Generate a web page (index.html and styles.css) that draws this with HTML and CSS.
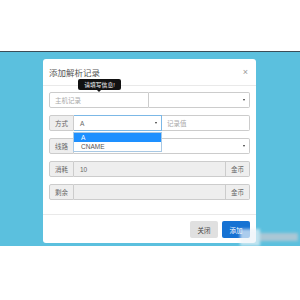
FILE: index.html
```html
<!DOCTYPE html>
<html lang="zh-CN">
<head>
    <meta charset="UTF-8">
    <meta name="viewport" content="width=device-width, initial-scale=1.0">
    <title>添加解析记录</title>
    <link rel="stylesheet" href="styles.css">
</head>
<body>
<div class="backdrop">
    <div class="modal">
        <div class="modal-header">
            <span class="modal-title">添加解析记录</span>
            <span class="close">&times;</span>
        </div>
        <div class="modal-body">
            <div class="row">
                <div class="control first w100 placeholder">主机记录</div>
                <div class="control last grow select"><span></span><span class="caret"></span></div>
            </div>
            <div class="row">
                <div class="addon first">方式</div>
                <div class="control w88 select focus"><span>A</span><span class="caret"></span></div>
                <div class="control last grow placeholder">记录值</div>
            </div>
            <div class="row">
                <div class="addon first">线路</div>
                <div class="control last grow select"><span></span><span class="caret"></span></div>
            </div>
            <div class="row">
                <div class="addon first">消耗</div>
                <div class="control grow disabled">10</div>
                <div class="addon last w24">金币</div>
            </div>
            <div class="row">
                <div class="addon first">剩余</div>
                <div class="control grow disabled"></div>
                <div class="addon last w24">金币</div>
            </div>
        </div>
        <div class="modal-footer">
            <button class="btn btn-default">关闭</button>
            <button class="btn btn-primary">添加</button>
        </div>

        <div class="tooltip">请填写信息!</div>
        <ul class="dropdown">
            <li class="active">A</li>
            <li>CNAME</li>
        </ul>
    </div>
    <div class="watermark">
        <span class="wm-light"></span>
        <span class="wm-gray"></span>
    </div>
</div>
</body>
</html>
```

FILE: styles.css
```css
body {
    margin: 0;
    background: #fff;
    font-family: "Liberation Sans", "Noto Sans CJK SC", sans-serif;
    font-size: 6.5px;
    color: #555;
}
.backdrop {
    position: relative;
    margin-top: 51px;
    height: 195px;
    border-top: 1px solid #3b4d58;
    background: #5bc0de;
    padding: 7px 0 0 43px;
    box-sizing: border-box;
}
.modal {
    position: relative;
    width: 213px;
    height: 184px;
    background: #fff;
    border-radius: 3px;
    display: flex;
    flex-direction: column;
}
.modal-header {
    height: 26px;
    border-bottom: 1px solid #e9e9e9;
    display: flex;
    align-items: center;
    justify-content: space-between;
    padding: 0 8px 0 6px;
}
.modal-title {
    font-size: 8.5px;
    color: #555;
}
.close {
    font-size: 9px;
    color: #999;
}
.modal-body {
    padding: 6px 6px 14px;
    display: flex;
    flex-direction: column;
    gap: 7px;
}
.row {
    display: flex;
    height: 16px;
}
.control, .addon {
    box-sizing: border-box;
    height: 16px;
    border: 1px solid #ccc;
    display: flex;
    align-items: center;
}
.control {
    padding: 0 4px 0 5px;
    color: #666;
}
.control + .control, .addon + .control, .control + .addon {
    border-left: none;
}
.addon {
    width: 25px;
    flex-shrink: 0;
    justify-content: center;
    background: #eee;
    color: #666;
}
.first {
    border-radius: 2px 0 0 2px;
}
.last {
    border-radius: 0 2px 2px 0;
}
.w100 {
    width: 100px;
}
.w88 {
    width: 88px;
    flex-shrink: 0;
}
.w24 {
    width: 24px;
}
.grow {
    flex: 1;
}
.placeholder {
    color: #aaa;
}
.select {
    justify-content: space-between;
}
.caret {
    width: 0;
    height: 0;
    border-left: 1.5px solid transparent;
    border-right: 1.5px solid transparent;
    border-top: 2.5px solid #333;
}
.focus {
    border: 1px solid #7cb8e6;
    padding-left: 6px;
}
.disabled {
    background: #eee;
    padding-left: 6px;
}
.modal-footer {
    flex: 1;
    border-top: 1px solid #e9e9e9;
    display: flex;
    justify-content: flex-end;
    align-items: flex-start;
    gap: 4px;
    padding: 6px 6px 0;
}
.btn {
    width: 28px;
    height: 17px;
    border: none;
    border-radius: 2px;
    font-family: inherit;
    font-size: 6.5px;
    padding: 0;
}
.btn-default {
    background: #e0e0e0;
    color: #444;
}
.btn-primary {
    background: #1672d3;
    color: #fff;
}
.tooltip {
    position: absolute;
    left: 35px;
    top: 20px;
    width: 43px;
    height: 11px;
    background: #111;
    color: #fff;
    border-radius: 2px;
    font-size: 5.8px;
    display: flex;
    align-items: center;
    justify-content: center;
}
.tooltip::after {
    content: "";
    position: absolute;
    left: 19px;
    bottom: -2px;
    border-left: 2px solid transparent;
    border-right: 2px solid transparent;
    border-top: 2px solid #111;
}
.dropdown {
    position: absolute;
    left: 30px;
    top: 73px;
    width: 89px;
    margin: 0;
    padding: 0;
    list-style: none;
    background: #fff;
    border: 1px solid #a9c9e4;
    box-sizing: border-box;
}
.dropdown li {
    height: 9px;
    line-height: 9px;
    padding-left: 7px;
    color: #555;
}
.dropdown li.active {
    background: #1e90ff;
    color: #fff;
}
.watermark {
    position: absolute;
    left: 238px;
    top: 174px;
    width: 62px;
    height: 22px;
    filter: blur(1.5px);
}
.wm-light {
    position: absolute;
    left: 2px;
    top: 3px;
    width: 20px;
    height: 17px;
    background: rgba(235, 242, 248, 0.7);
}
.wm-gray {
    position: absolute;
    left: 22px;
    top: 7px;
    width: 38px;
    height: 8px;
    background: rgba(190, 200, 210, 0.8);
}
```
